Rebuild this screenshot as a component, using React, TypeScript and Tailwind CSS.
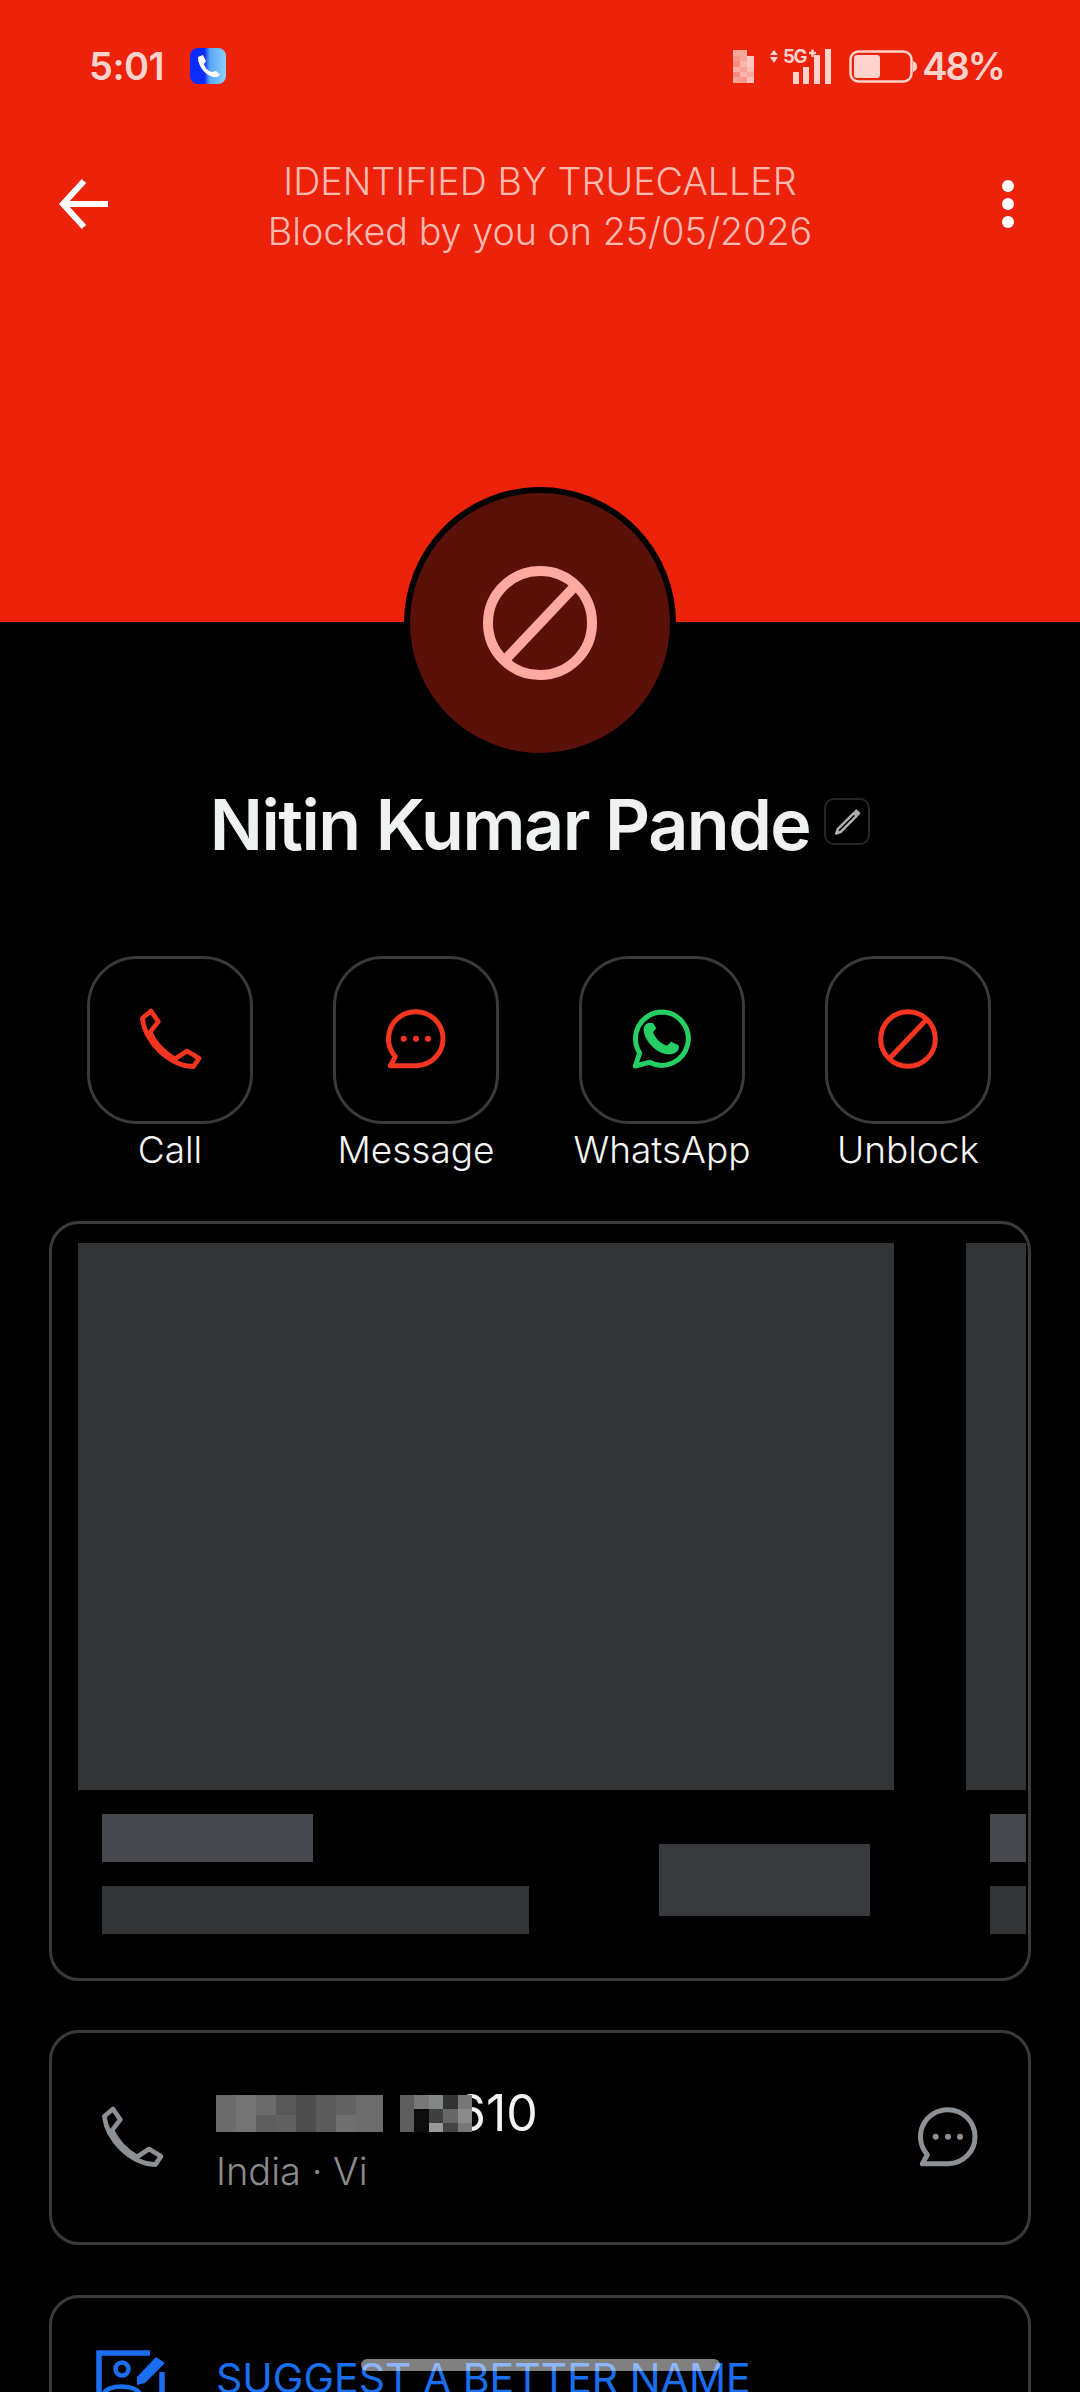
const PhoneIcon = ({ color }: { color: string }) => (
  <svg viewBox="0 0 270 270" className="w-[90px] h-[90px]" fill="none" stroke={color} strokeWidth="14" strokeLinejoin="round">
    <path d="M78 48 L100 80 L75 112 C90 145 115 172 150 192 L186 168 L222 190 L205 215 C130 212 60 140 52 70 Z" />
  </svg>
);

const MessageIcon = ({ color }: { color: string }) => (
  <svg viewBox="0 0 270 270" className="w-[90px] h-[90px]" fill="none" stroke={color} strokeWidth="15" strokeLinejoin="round">
    <path d="M135 50 A81 81 0 0 1 135 212 L58 212 L73 185 A81 81 0 0 1 135 50 Z" />
    <circle cx="98" cy="131" r="9" fill={color} stroke="none" />
    <circle cx="135" cy="131" r="9" fill={color} stroke="none" />
    <circle cx="171" cy="131" r="9" fill={color} stroke="none" />
  </svg>
);

const WhatsAppIcon = () => (
  <svg viewBox="0 0 270 270" className="w-[90px] h-[90px]" fill="none">
    <path d="M135 51 A80 80 0 1 1 97 202 L55 213 L68 174 A80 80 0 0 1 135 51 Z" stroke="#25cf63" strokeWidth="15" strokeLinejoin="round" />
    <path d="M96 84 C88 84 80 92 80 104 C80 130 110 170 150 178 C170 180 186 170 186 156 L184 150 L162 140 L150 152 C130 146 115 130 108 112 L118 100 L108 84 Z" fill="#25cf63" />
  </svg>
);

const BlockIcon = () => (
  <svg viewBox="0 0 270 270" className="w-[90px] h-[90px]" fill="none" stroke="#f5351f" strokeWidth="15">
    <circle cx="135" cy="132" r="82" />
    <path d="M192 72 L78 192" />
  </svg>
);

const Action = ({ label, children }: { label: string; children: React.ReactNode }) => (
  <div className="flex flex-col items-center">
    <div className="w-[166px] h-[168px] rounded-[50px] border-[3px] border-[#3a3a3a] flex items-center justify-center">
      {children}
    </div>
    <div className="mt-[1px] text-[37px] font-light leading-[50px] text-[#f6f6f6] whitespace-nowrap">{label}</div>
  </div>
);

const Item = () => (
  <div className="w-[816px] shrink-0 flex flex-col">
    <div className="h-[547px] bg-[#333436]" />
    <div className="flex justify-between pl-[24px] pr-[24px]">
      <div className="flex flex-col gap-[24px] pt-[24px]">
        <div className="w-[211px] h-[48px] bg-[#47484d]" />
        <div className="w-[427px] h-[48px] bg-[#333436]" />
      </div>
      <div className="w-[211px] h-[72px] mt-[54px] bg-[#393a3d]" />
    </div>
  </div>
);

const redactLeft = [
  ["h-[20px] w-[20px] bg-[#6b6b6b]", "h-[17px] w-[20px] bg-[#6b6b6b]"],
  ["h-[20px] w-[20px] bg-[#737373]", "h-[17px] w-[20px] bg-[#737373]"],
  ["h-[20px] w-[20px] bg-[#6b6b6b]", "h-[17px] w-[20px] bg-[#5e5e5e]"],
  ["h-[20px] w-[20px] bg-[#585858]", "h-[17px] w-[20px] bg-[#616161]"],
  ["h-[20px] w-[20px] bg-[#4d4d4d]", "h-[17px] w-[20px] bg-[#4d4d4d]"],
  ["h-[20px] w-[20px] bg-[#5b5b5b]", "h-[17px] w-[20px] bg-[#5b5b5b]"],
  ["h-[20px] w-[20px] bg-[#636363]", "h-[17px] w-[20px] bg-[#6f6f6f]"],
  ["h-[20px] w-[27px] bg-[#6c6c6c]", "h-[17px] w-[27px] bg-[#6c6c6c]"],
];

const redactRight = [
  ["bg-[#5e5e5e]", "bg-[#5e5e5e]", "bg-[#5e5e5e]"],
  ["bg-[#777777]", "bg-[#0c0c0c]", "bg-[#0c0c0c]"],
  ["bg-[#838785]", "bg-[#404040]", "bg-[#999999]"],
  ["bg-[#333333]", "bg-[#666666]", "bg-[#444444]"],
  ["bg-[#777777]", "bg-[#8a8a8a]", "bg-[#777777]"],
];

export default function App() {
  return (
    <div className="relative w-[1080px] h-[2392px] overflow-hidden bg-black flex flex-col font-[Inter,sans-serif]">
      <div className="h-[622px] shrink-0 bg-[#ec220a] flex flex-col">
        <div className="flex items-center h-[44px] mt-[44px] pl-[89px] pr-[76px] text-[#ffd2cc]">
          <span className="text-[38px] font-semibold tracking-[-0.5px] leading-[44px]">5:01</span>
          <svg viewBox="0 0 36 36" className="w-[36px] h-[36px] ml-[26px]">
            <defs>
              <linearGradient id="tc" x1="0" x2="1" y1="0" y2="0">
                <stop offset="0.4" stopColor="#0a2cff" />
                <stop offset="0.55" stopColor="#5aa6f5" />
                <stop offset="1" stopColor="#8ed0f8" />
              </linearGradient>
            </defs>
            <rect width="36" height="36" rx="8" fill="url(#tc)" />
            <path d="M8 9 L13 7 L16 13 L14 16 C15 20 18 23 22 24 L26 23 L30 27 L27 29 C18 30 8 20 8 9 Z" fill="#fff" />
          </svg>
          <div className="ml-auto flex items-center">
            <svg viewBox="0 0 21 33" className="w-[21px] h-[33px]">
              <rect x="0" y="0" width="14" height="6" fill="#f9a89e" />
              <rect x="0" y="6" width="7" height="5" fill="#f6988c" />
              <rect x="7" y="6" width="7" height="5" fill="#f8a398" />
              <rect x="14" y="6" width="7" height="5" fill="#fdc6be" />
              <rect x="0" y="11" width="7" height="6" fill="#f58a7d" />
              <rect x="7" y="11" width="7" height="6" fill="#fbb5ac" />
              <rect x="14" y="11" width="7" height="6" fill="#fdc6be" />
              <rect x="0" y="17" width="7" height="5" fill="#fbb0a6" />
              <rect x="7" y="17" width="7" height="5" fill="#f7a094" />
              <rect x="14" y="17" width="7" height="5" fill="#fcbdb4" />
              <rect x="0" y="22" width="7" height="5" fill="#f58c7f" />
              <rect x="7" y="22" width="7" height="5" fill="#fbb5ac" />
              <rect x="14" y="22" width="7" height="5" fill="#f9a99f" />
              <rect x="0" y="27" width="7" height="6" fill="#f7a094" />
              <rect x="7" y="27" width="7" height="6" fill="#f6988c" />
              <rect x="14" y="27" width="7" height="6" fill="#fcc2ba" />
            </svg>
            <svg viewBox="0 0 66 38" className="w-[66px] h-[38px] ml-[14px] mt-[2px] overflow-visible" fill="#ffd2cc">
              <path d="M2 7 L6 2 L10 7 Z M2 9 L10 9 L6 15 Z" />
              <text x="15" y="15" fontSize="18.5" fontWeight="700" fontFamily="Inter, sans-serif" letterSpacing="-1.2">5G</text>
              <path d="M41 5 H48 M44.5 1.5 V9" stroke="#ffd2cc" strokeWidth="2.4" fill="none" />
              <rect x="25" y="24" width="6" height="12" />
              <rect x="35" y="19" width="6" height="17" />
              <rect x="46" y="7" width="6" height="29" />
              <rect x="57" y="1" width="6" height="35" />
            </svg>
            <svg viewBox="0 0 68 33" className="w-[68px] h-[33px] ml-[15px]" fill="none">
              <rect x="1.5" y="1.5" width="61" height="30" rx="8" stroke="#ffd2cc" strokeWidth="2.5" />
              <rect x="5" y="5" width="26" height="23" rx="3" fill="#ffd2cc" />
              <path d="M64 11 C67 12 68 14 68 16.5 C68 19 67 21 64 22 Z" fill="#ffd2cc" />
            </svg>
            <span className="ml-[5px] text-[38px] font-semibold leading-[44px] tracking-[-2px]">48%</span>
          </div>
        </div>
        <div className="flex items-center h-[100px] mt-[66px]">
          <div className="w-[114px] pl-[54px]">
            <svg viewBox="0 0 60 60" className="w-[60px] h-[60px]" fill="none" stroke="#fff" strokeWidth="6">
              <path d="M54 30 H9 M30 7 L9 30 L30 53" />
            </svg>
          </div>
          <div className="flex-1 flex flex-col items-center pt-[3px] text-[37.7px] leading-[50px] text-[#ffb9af] font-light whitespace-nowrap">
            <span>IDENTIFIED BY TRUECALLER</span>
            <span>Blocked by you on 25/05/2026</span>
          </div>
          <div className="w-[114px] flex justify-end pr-[66px]">
            <div className="w-[12px] flex flex-col gap-[6px]">
              <div className="w-[12px] h-[12px] rounded-full bg-white" />
              <div className="w-[12px] h-[12px] rounded-full bg-white" />
              <div className="w-[12px] h-[12px] rounded-full bg-white" />
            </div>
          </div>
        </div>
      </div>

      <div className="w-[272px] h-[272px] shrink-0 -mt-[135px] self-center rounded-full border-[6px] border-black bg-[#59110a] flex items-center justify-center">
        <svg viewBox="0 0 114 114" className="w-[114px] h-[114px]" fill="none" stroke="#ffa8a0" strokeWidth="10">
          <circle cx="57" cy="57" r="52" />
          <path d="M92 20 L22 94" />
        </svg>
      </div>

      <div className="mt-[24px] flex items-center justify-center gap-[14px]">
        <span className="text-[70px] leading-[84px] font-semibold tracking-[-1.5px] text-[#f0f2f2] whitespace-nowrap">Nitin Kumar Pande</span>
        <div className="w-[46px] h-[47px] rounded-[10px] border-[2px] border-[#262626] flex items-center justify-center -mt-[8px]">
          <svg viewBox="0 0 30 30" className="w-[34px] h-[34px] shrink-0" fill="none">
            <path d="M21 8 L7 22 L5.5 26 L9.5 24.5 L23.5 10.5 Z" stroke="#b0b0b0" strokeWidth="2.2" strokeLinejoin="round" />
            <path d="M23 4.5 L27 8 L25 10.5 L21 7 Z" fill="#b0b0b0" />
          </svg>
        </div>
      </div>

      <div className="mt-[89px] ml-[47px] grid grid-cols-[repeat(4,246px)]">
        <Action label="Call"><PhoneIcon color="#f5351f" /></Action>
        <Action label="Message"><MessageIcon color="#f5351f" /></Action>
        <Action label="WhatsApp"><WhatsAppIcon /></Action>
        <Action label="Unblock"><BlockIcon /></Action>
      </div>

      <div className="mt-[46px] mx-[49px] h-[760px] shrink-0 rounded-[30px] border-[3px] border-[#3a3a3a] pt-[19px] pl-[26px] pr-[2px]">
        <div className="flex gap-[72px] overflow-hidden">
          <Item />
          <Item />
        </div>
      </div>

      <div className="mt-[49px] mx-[49px] h-[215px] shrink-0 rounded-[30px] border-[3px] border-[#3a3a3a] flex items-center pl-[35px] pr-[35px]">
        <PhoneIcon color="#8c9196" />
        <div className="ml-[39px] mt-[12px] flex flex-col">
          <div className="flex items-start h-[37px]">
            <div className="relative z-10 flex">
              {redactLeft.map((col, i) => (
                <div key={i} className="flex flex-col">
                  {col.map((c, j) => <div key={j} className={c} />)}
                </div>
              ))}
              <div className="w-[17px] h-[37px] bg-black" />
              {redactRight.map((col, i) => (
                <div key={i} className="flex flex-col">
                  {col.map((c, j) => <div key={j} className={`w-[14.4px] h-[14px] last:h-[9px] ${c}`} />)}
                </div>
              ))}
            </div>
            <span className="-ml-[17px] text-[50px] leading-[37px] text-[#f2f2f2]">610</span>
          </div>
          <div className="mt-[17px] text-[38px] leading-[44px] text-[#8c8c8c] font-light">India · Vi</div>
        </div>
        <div className="ml-auto">
          <MessageIcon color="#8c9196" />
        </div>
      </div>

      <div className="mt-[50px] mx-[49px] h-[215px] shrink-0 rounded-[30px] border-[3px] border-[#3a3a3a] flex items-start pl-[44px] pt-[52px]">
        <svg viewBox="0 0 71 71" className="w-[71px] h-[71px] shrink-0" fill="none" stroke="#1a6ef0">
          <path d="M54 3 H3 V70 H66 V22" strokeWidth="5.5" />
          <circle cx="26" cy="19" r="6.5" strokeWidth="4.5" />
          <path d="M8 44 C10 34 40 34 44 44 V52 H8 Z" strokeWidth="4.5" />
          <path d="M41 27 L60 7 L69 13 L49 33 L41 35 Z" fill="#1a6ef0" stroke="none" />
        </svg>
        <span className="ml-[49px] mt-[3px] text-[41px] leading-[50px] text-[#1a6ef0] whitespace-nowrap">SUGGEST A BETTER NAME</span>
      </div>

      <div className="absolute left-[361px] top-[2359px] w-[359px] h-[12px] rounded-[8px] bg-white/50" />
    </div>
  );
}
